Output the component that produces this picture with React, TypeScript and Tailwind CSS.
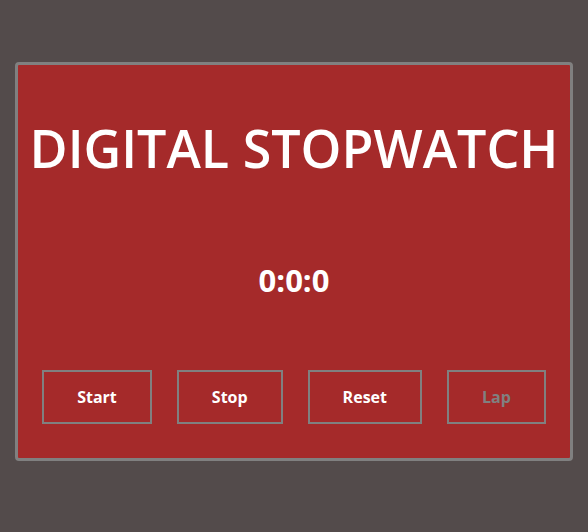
export default function App() {
  const buttons = [
    { label: "Start", disabled: false },
    { label: "Stop", disabled: false },
    { label: "Reset", disabled: false },
    { label: "Lap", disabled: true },
  ];

  return (
    <div className="min-h-[532px] w-full bg-[#534b4b] px-[15px] pt-[62px] pb-[71px] font-['Open_Sans',sans-serif]">
      <div className="flex h-[399px] flex-col items-center rounded-[4px] border-[3px] border-[#808080] bg-[#a52a2a]">
        <h1 className="mt-[57px] text-[52px] leading-none font-semibold text-white">
          DIGITAL STOPWATCH
        </h1>
        <div className="mt-[91px] text-[31px] leading-none font-bold text-white">
          0:0:0
        </div>
        <div className="mt-[74px] flex justify-center gap-[25px]">
          {buttons.map((b) => (
            <button
              key={b.label}
              disabled={b.disabled}
              className={`h-[54px] border-2 border-[#808080] bg-transparent px-[33px] text-[16px] font-bold ${
                b.disabled ? "text-[#808080]" : "text-white"
              }`}
            >
              {b.label}
            </button>
          ))}
        </div>
      </div>
    </div>
  );
}
